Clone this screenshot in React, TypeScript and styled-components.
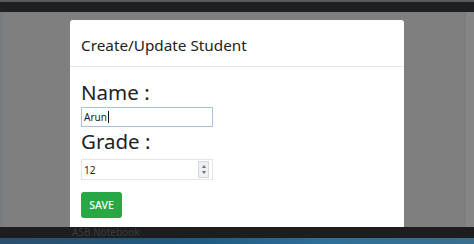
import styled, { createGlobalStyle } from "styled-components";

const Global = createGlobalStyle`
  html, body {
    margin: 0;
    padding: 0;
    width: 474px;
    height: 244px;
    overflow: hidden;
    font-family: "Noto Sans", "Open Sans", sans-serif;
  }
`;

const App = () => {
  return (
    <>
      <Global />
      <Screen>
        <TopBar />
        <Backdrop>
          <LeftEdge />
          <Overlay>
            <Modal>
              <Header>
                <Title>Create/Update Student</Title>
              </Header>
              <Body>
                <Label>Name :</Label>
                <TextField>
                  <span>Arun</span>
                  <Caret />
                </TextField>
                <Label>Grade :</Label>
                <NumberField>
                  <span>12</span>
                  <Spinner>
                    <Arrow $up />
                    <Arrow />
                  </Spinner>
                </NumberField>
                <SaveButton>SAVE</SaveButton>
              </Body>
            </Modal>
          </Overlay>
          <RightEdge />
        </Backdrop>
        <Taskbar>ASB Notebook</Taskbar>
        <Desktop />
      </Screen>
    </>
  );
};

const Screen = styled.div`
  width: 474px;
  height: 244px;
  display: flex;
  flex-direction: column;
  background: #1d1e20;
`;

const TopBar = styled.div`
  height: 10px;
  border-top: 2px solid #56585b;
  background: #1f2022;
  flex-shrink: 0;
`;

const Backdrop = styled.div`
  flex: 1;
  display: flex;
  overflow: hidden;
`;

const LeftEdge = styled.div`
  width: 3px;
  background: #777b82;
`;

const RightEdge = styled.div`
  width: 8px;
  background: #868686;
  border-left: 1px solid #7a7a7a;
`;

const Overlay = styled.div`
  flex: 1;
  background: #7f7f7f;
  padding: 8px 0 0 67px;
`;

const Modal = styled.div`
  width: 334px;
  background: #fff;
  border-radius: 3px 3px 0 0;
  display: flex;
  flex-direction: column;
`;

const Header = styled.div`
  height: 46px;
  display: flex;
  align-items: center;
  padding: 0 11px;
  border-bottom: 1px solid #e6e6e6;
`;

const Title = styled.h5`
  margin: 0;
  font-size: 15.3px;
  font-weight: 400;
  color: #222;
  padding-top: 4px;
`;

const Body = styled.div`
  padding: 11px 11px;
  display: flex;
  flex-direction: column;
  align-items: flex-start;
`;

const Label = styled.div`
  font-size: 20.5px;
  line-height: 29px;
  color: #222;
`;

const Field = styled.div`
  box-sizing: border-box;
  width: 132px;
  height: 20px;
  display: flex;
  align-items: center;
  padding: 0 2px;
  font-size: 10px;
  color: #222;
`;

const TextField = styled(Field)`
  border: 1px solid #a6c3de;
`;

const NumberField = styled(Field)`
  border: 1px solid #e1e4e8;
  height: 21px;
  margin-top: 3px;
  span {
    flex: 1;
  }
`;

const Caret = styled.i`
  width: 1px;
  height: 12px;
  background: #111;
  margin-left: 1px;
`;

const Spinner = styled.div`
  width: 9px;
  height: 15px;
  margin-right: 1px;
  border: 1px solid #d5d8dc;
  background: #eef0f3;
  display: flex;
  flex-direction: column;
  align-items: center;
  justify-content: space-evenly;
`;

const Arrow = styled.i<{ $up?: boolean }>`
  width: 0;
  height: 0;
  border-left: 2.5px solid transparent;
  border-right: 2.5px solid transparent;
  ${(p) =>
    p.$up ? "border-bottom: 3px solid #6b7380;" : "border-top: 3px solid #6b7380;"}
`;

const SaveButton = styled.button`
  margin-top: 12px;
  width: 41px;
  height: 26px;
  border: none;
  border-radius: 3px;
  background: #28a745;
  color: #fff;
  font-family: "Noto Sans", "Open Sans", sans-serif;
  font-size: 10.5px;
  font-weight: 500;
  padding: 0;
`;

const Taskbar = styled.div`
  height: 11px;
  flex-shrink: 0;
  background: #1c1d1f;
  color: #3b3c3e;
  font-size: 10px;
  line-height: 11px;
  padding-left: 72px;
  white-space: nowrap;
`;

const Desktop = styled.div`
  height: 6px;
  flex-shrink: 0;
  background: linear-gradient(90deg, #2c4f6e 0%, #1e5a82 40%, #2f7099 70%, #3a6f8f 100%);
`;

export default App;
